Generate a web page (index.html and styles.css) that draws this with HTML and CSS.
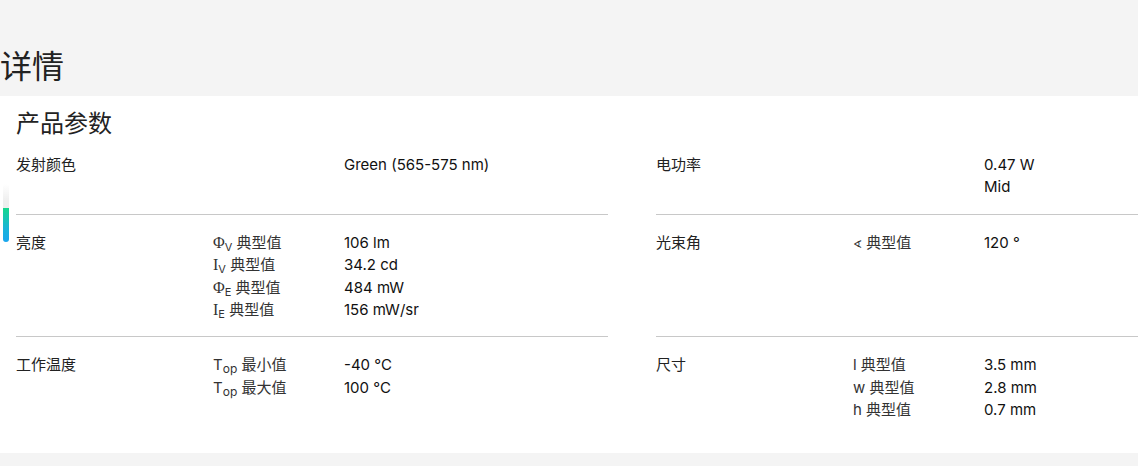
FILE: index.html
```html
<!DOCTYPE html>
<html lang="zh">
<head>
<meta charset="utf-8">
<link rel="stylesheet" href="styles.css">
</head>
<body>
<h2 class="page-title">详情</h2>
<section class="panel">
  <div class="scroll-indicator"><span class="thumb"></span></div>
  <h3 class="panel-title">产品参数</h3>
  <div class="spec-grid">
    <div class="spec-row">
      <div class="spec-label">发射颜色</div>
      <div class="spec-sub"></div>
      <div class="spec-val"><div class="plain">Green (565-575 nm)</div></div>
    </div>
    <div class="spec-row">
      <div class="spec-label">电功率</div>
      <div class="spec-sub"></div>
      <div class="spec-val"><div>0.47 W</div><div class="plain">Mid</div></div>
    </div>
    <div class="spec-row">
      <div class="spec-label">亮度</div>
      <div class="spec-sub">
        <div><span class="sym">Φ</span><sub>V</sub> 典型值</div>
        <div><span class="sym">I</span><sub>V</sub> 典型值</div>
        <div><span class="sym">Φ</span><sub>E</sub> 典型值</div>
        <div><span class="sym">I</span><sub>E</sub> 典型值</div>
      </div>
      <div class="spec-val">
        <div>106 lm</div>
        <div>34.2 cd</div>
        <div>484 mW</div>
        <div>156 mW/sr</div>
      </div>
    </div>
    <div class="spec-row">
      <div class="spec-label">光束角</div>
      <div class="spec-sub"><div><span class="angle">∢</span> 典型值</div></div>
      <div class="spec-val"><div>120 °</div></div>
    </div>
    <div class="spec-row last">
      <div class="spec-label">工作温度</div>
      <div class="spec-sub">
        <div>T<sub class="op">op</sub> 最小值</div>
        <div>T<sub class="op">op</sub> 最大值</div>
      </div>
      <div class="spec-val">
        <div>-40 °C</div>
        <div>100 °C</div>
      </div>
    </div>
    <div class="spec-row last">
      <div class="spec-label">尺寸</div>
      <div class="spec-sub">
        <div>l 典型值</div>
        <div>w 典型值</div>
        <div>h 典型值</div>
      </div>
      <div class="spec-val">
        <div>3.5 mm</div>
        <div>2.8 mm</div>
        <div>0.7 mm</div>
      </div>
    </div>
  </div>
</section>
</body>
</html>
```

FILE: styles.css
```css
html, body {
  margin: 0;
  padding: 0;
}
body {
  background: #f4f4f4;
  color: #222;
  font-family: Inter, "Noto Sans CJK SC", sans-serif;
  overflow: hidden;
}
.page-title {
  margin: 0;
  padding: 42px 0 0 0;
  height: 54px;
  font-family: "Noto Sans CJK SC", sans-serif;
  font-size: 32px;
  font-weight: 400;
  line-height: 44px;
  color: #222;
}
.panel {
  position: relative;
  background: #fff;
  padding: 11px 0 16px 16px;
  overflow: hidden;
}
.panel-title {
  margin: 0;
  font-family: "Noto Sans CJK SC", sans-serif;
  font-size: 24px;
  font-weight: 400;
  line-height: 30px;
  color: #222;
}
.spec-grid {
  display: grid;
  grid-template-columns: 592px 592px;
  column-gap: 48px;
}
.spec-row {
  display: grid;
  grid-template-columns: 197px 131px 1fr;
  align-items: start;
  padding: 17px 0 15px;
  border-bottom: 1px solid #c8c8c8;
  font-size: 15px;
  line-height: 22.4px;
}
.spec-row.last {
  border-bottom: none;
}
.spec-sub > div,
.spec-val > div {
  height: 22.4px;
  white-space: nowrap;
}
.spec-label {
  color: #222;
}
.spec-sub {
  color: #333;
}
.spec-val {
  font-weight: 400;
  color: #111;
}
.spec-val .plain {
  font-weight: 400;
}
.sym {
  font-family: "Liberation Serif", serif;
  font-size: 16px;
  line-height: 1;
}
sub {
  font-size: 11px;
  vertical-align: -3px;
  line-height: 0;
}
.op {
  font-size: 12px;
}
.angle {
  font-size: 11px;
}
.scroll-indicator {
  position: absolute;
  left: 3px;
  top: 88px;
  width: 6px;
  height: 58px;
  border-radius: 3px;
  background: linear-gradient(#fff, #eee 30%, #f2f2f2);
}
.thumb {
  position: absolute;
  left: 0;
  bottom: 0;
  width: 6px;
  height: 34px;
  border-radius: 0 0 3px 3px;
  background: linear-gradient(#14d78c, #18b4d8 60%, #19a6ef);
}
```
